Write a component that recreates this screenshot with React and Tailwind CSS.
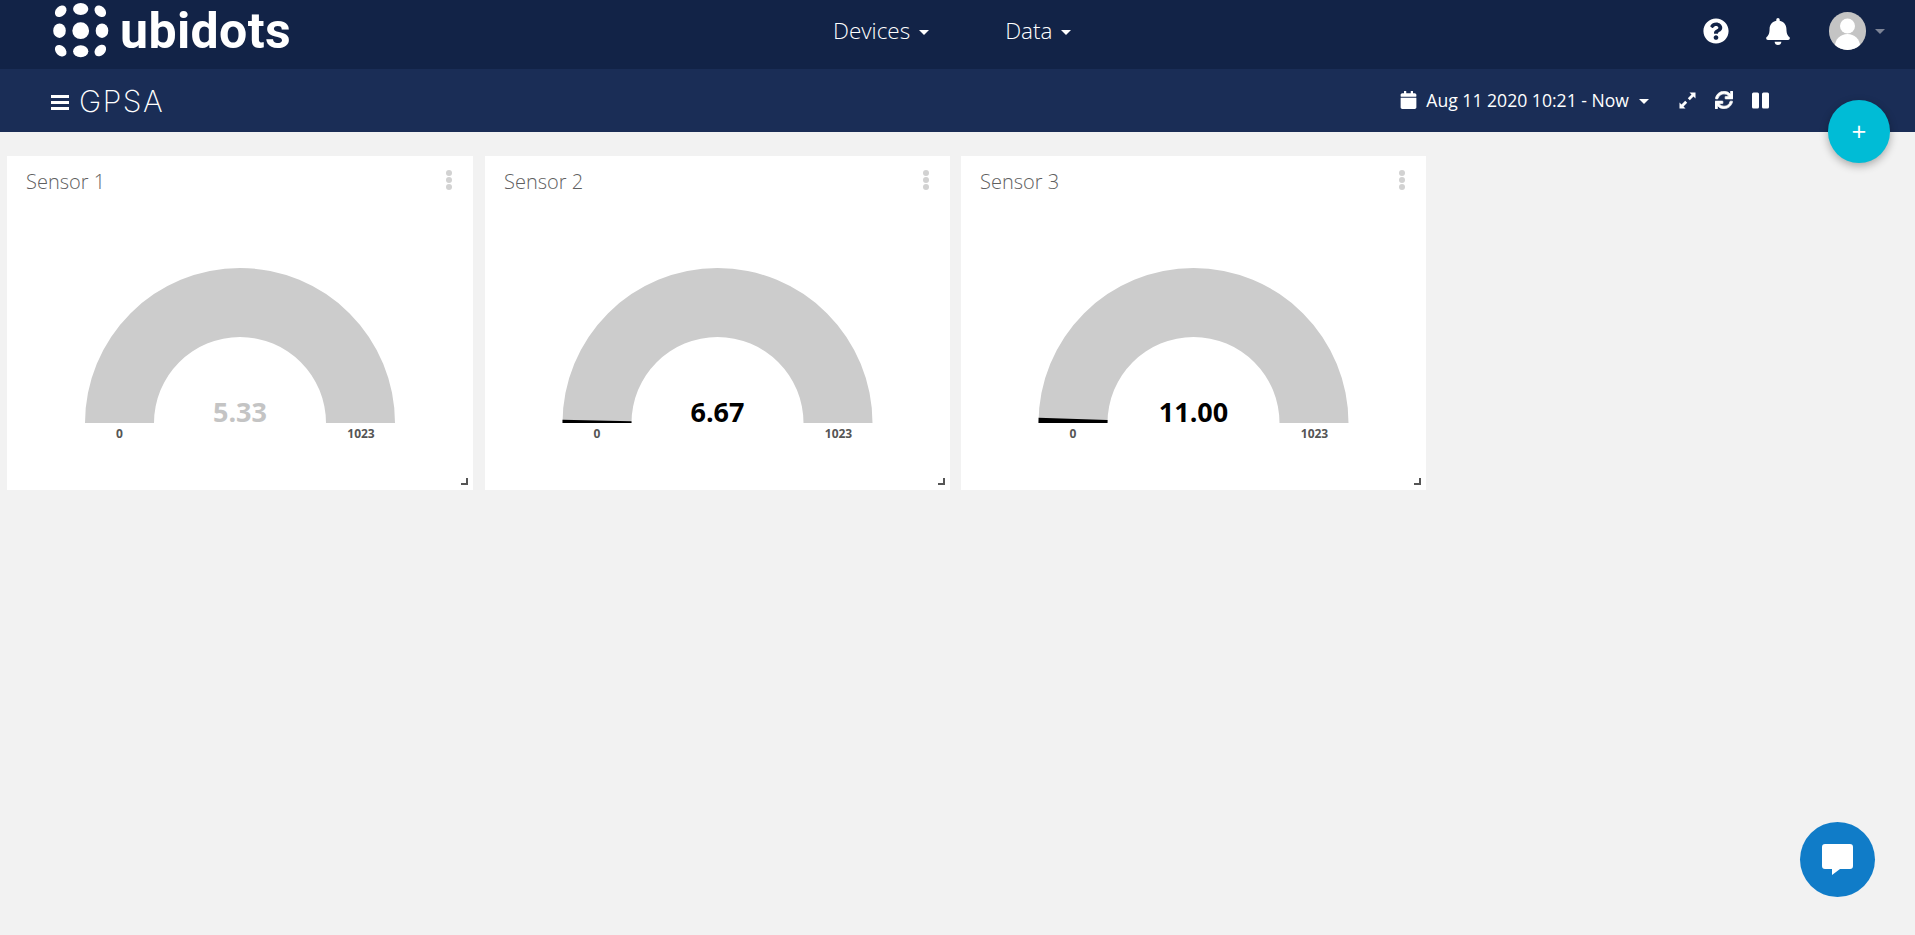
import { FaQuestionCircle, FaBell, FaCalendar, FaSync } from 'react-icons/fa'

const sensors = [
  { name: 'Sensor 1', value: '5.33', angle: 0, muted: true, size: 'w-[466px]', cx: 233 },
  { name: 'Sensor 2', value: '6.67', angle: 1.17, size: 'w-[465px] ml-[1px]', cx: 232.5 },
  { name: 'Sensor 3', value: '11.00', angle: 1.93, size: 'w-[465px]', cx: 232.5 },
]

function Logo() {
  return (
    <svg width="60" height="60" viewBox="50 2 60 60" fill="#fff" className="shrink-0">
      <ellipse cx="60.7" cy="12.3" rx="6.6" ry="4.9" transform="rotate(-45 60.7 12.3)" />
      <ellipse cx="80.7" cy="10" rx="7.6" ry="6" />
      <ellipse cx="100.3" cy="12.3" rx="6.6" ry="4.9" transform="rotate(45 100.3 12.3)" />
      <ellipse cx="59.5" cy="31.7" rx="6.3" ry="7.2" />
      <circle cx="80.7" cy="31.7" r="8.4" />
      <ellipse cx="102" cy="31.7" rx="6.3" ry="7.2" />
      <ellipse cx="60.7" cy="51.7" rx="6.6" ry="4.9" transform="rotate(45 60.7 51.7)" />
      <ellipse cx="80.7" cy="52.3" rx="7.6" ry="6" />
      <ellipse cx="100.3" cy="51.5" rx="6.6" ry="4.9" transform="rotate(-45 100.3 51.5)" />
    </svg>
  )
}

function Caret({ className }) {
  return <span className={`inline-block w-0 h-0 border-x-[5px] border-x-transparent border-t-[5px] ${className}`} />
}

function Gauge({ value, angle, muted, cx }) {
  const cy = 223
  const R = 155
  const r = 86
  const a = (angle * Math.PI) / 180
  const wedge = `M${cx - R} ${cy} L${cx - R * Math.cos(a)} ${cy - R * Math.sin(a)} L${cx - r * Math.cos(a)} ${cy - r * Math.sin(a)} L${cx - r} ${cy} Z`

  return (
    <svg viewBox={`0 0 ${cx * 2} 290`} width={cx * 2} height="290" className="block">
      <path
        d={`M${cx - R} ${cy} A${R} ${R} 0 0 1 ${cx + R} ${cy} L${cx + r} ${cy} A${r} ${r} 0 0 0 ${cx - r} ${cy} Z`}
        fill="#cccccc"
      />
      {angle > 0 && <path d={wedge} fill="#000" />}
      <text x={cx} y="222" textAnchor="middle" fontSize="27" fontWeight="700" fill={muted ? '#c4c4c4' : '#000'}>{value}</text>
      <text x={cx - 120.5} y="238" textAnchor="middle" fontSize="12" fontWeight="700" fill="#555">0</text>
      <text x={cx + 121} y="238" textAnchor="middle" fontSize="12" fontWeight="700" fill="#555">1023</text>
    </svg>
  )
}

function SensorCard({ name, value, angle, muted, size, cx }) {
  return (
    <div className={`relative h-[334px] bg-white ${size}`}>
      <div className="flex items-center justify-between h-[44px] pl-[19px] pr-[21px] pt-[3px]">
        <span className="mt-[5px] text-[20px] font-light text-[#5f5f5f]">{name}</span>
        <div className="flex flex-col gap-[1px]">
          <span className="w-[6px] h-[6px] rounded-full bg-[#d2d2d2]" />
          <span className="w-[6px] h-[6px] rounded-full bg-[#d2d2d2]" />
          <span className="w-[6px] h-[6px] rounded-full bg-[#d2d2d2]" />
        </div>
      </div>
      <Gauge value={value} angle={angle} muted={muted} cx={cx} />
      <svg width="7" height="7" viewBox="0 0 7 7" className="absolute right-[5px] bottom-[5px]">
        <path d="M5 0H7V7H0V5H5Z" fill="#555" />
      </svg>
    </div>
  )
}

export default function App() {
  return (
    <div className="relative h-[935px] w-full overflow-hidden bg-[#f2f2f2] font-['Open_Sans',sans-serif]">
      <header className="flex items-center h-[69px] pb-[7px] pl-[50px] bg-[#122347] text-white">
        <Logo />
        <span className="w-[170px] ml-[10px] font-['Roboto',sans-serif] font-bold text-[50px] leading-none tracking-[0.4px]">ubidots</span>
        <nav className="flex items-center ml-[543px] text-[22.5px] font-light">
          <span>Devices</span>
          <Caret className="ml-[9px] mt-[3px] border-t-white" />
          <span className="ml-[76px]">Data</span>
          <Caret className="ml-[9px] mt-[3px] border-t-white" />
        </nav>
        <div className="flex items-center ml-auto pr-[30px]">
          <FaQuestionCircle className="w-[26px] h-[26px]" />
          <FaBell className="w-[24px] h-[27px] ml-[37px]" />
          <div className="w-[37px] h-[38px] ml-[39px] rounded-full bg-[#c4c4c4] overflow-hidden">
            <svg width="37" height="38" viewBox="0 0 37 38" fill="#fff">
              <circle cx="18.5" cy="14" r="7.5" />
              <ellipse cx="18.5" cy="34" rx="12.5" ry="12" />
            </svg>
          </div>
          <Caret className="ml-[9px] border-t-[#7d8496]" />
        </div>
      </header>

      <div className="flex items-center h-[63px] pl-[51px] bg-[#1a2d56] text-white">
        <div className="flex flex-col gap-[3px] w-[18px] mt-[3px]">
          <span className="h-[3px] bg-white" />
          <span className="h-[3px] bg-white" />
          <span className="h-[3px] bg-white" />
        </div>
        <span className="ml-[10px] font-['Inter',sans-serif] font-extralight text-[30px] leading-none tracking-[1.5px]">GPSA</span>
        <div className="flex items-center ml-auto pr-[146px]">
          <FaCalendar className="w-[17px] h-[18px]" />
          <span className="ml-[9px] text-[17.6px]">Aug 11 2020 10:21 - Now</span>
          <Caret className="ml-[10px] mt-[2px] border-t-white" />
          <svg width="17" height="17" viewBox="0 0 17 17" fill="#fff" className="ml-[30px]">
            <path d="M10.5 0.5H16.5V6.5L14.5 4.5L10.8 8.2L8.8 6.2L12.5 2.5ZM6.2 8.8L8.2 10.8L4.5 14.5L6.5 16.5H0.5V10.5L2.5 12.5Z" />
          </svg>
          <FaSync className="w-[18px] h-[18px] ml-[19px] stroke-[20px]" />
          <svg width="17" height="17" viewBox="0 0 17 17" fill="#fff" className="ml-[19px]">
            <rect x="0" y="0.5" width="7" height="16" rx="1.5" />
            <rect x="10" y="0.5" width="7" height="16" rx="1.5" />
          </svg>
        </div>
      </div>

      <main className="flex gap-[11px] pl-[7px] pt-[24px]">
        {sensors.map((s) => (
          <SensorCard key={s.name} {...s} />
        ))}
      </main>

      <button className="absolute top-[100px] right-[25px] flex items-center justify-center w-[62px] h-[63px] rounded-full bg-[#00bcd6] text-white text-[26px] shadow-[0_3px_8px_rgba(0,0,0,0.3)]">
        +
      </button>

      <button className="absolute right-[40px] bottom-[38px] flex items-center justify-center w-[75px] h-[75px] rounded-full bg-[#107cc8]">
        <svg width="31" height="31" viewBox="0 0 31 31" fill="#fff">
          <path d="M3 0H28Q31 0 31 3V22Q31 25 28 25H18L10 31V25H3Q0 25 0 22V3Q0 0 3 0Z" />
        </svg>
      </button>
    </div>
  )
}
